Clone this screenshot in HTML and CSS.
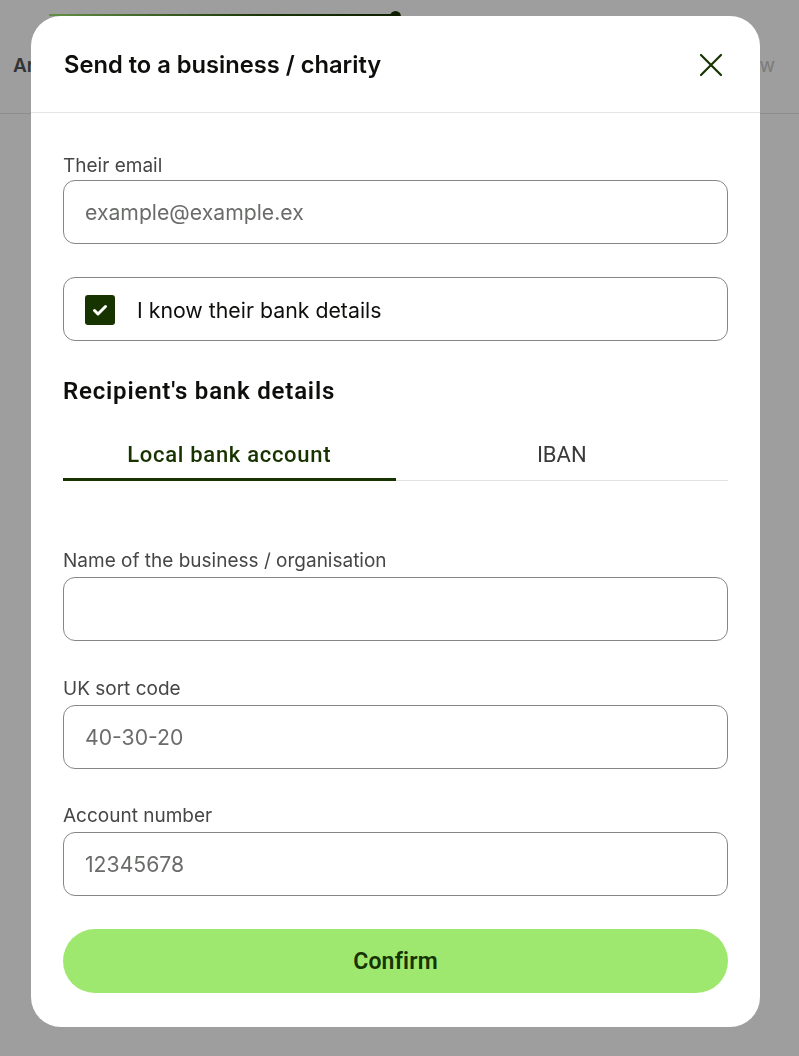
FILE: index.html
```html
<!DOCTYPE html>
<html lang="en">
<head>
<meta charset="utf-8">
<title>Send to a business / charity</title>
<link rel="stylesheet" href="styles.css">
</head>
<body>
<div class="page">
  <div class="progress">
    <div class="progress-fill"></div>
    <span class="progress-dot"></span>
  </div>
  <nav class="steps">
    <span class="step step-done">Ar</span>
    <span class="step step-next">Review</span>
  </nav>
</div>

<div class="overlay"></div>

<div class="modal" role="dialog" aria-labelledby="modal-title">
  <header class="modal-header">
    <h2 id="modal-title" class="modal-title">Send to a business / charity</h2>
    <button class="close-btn" aria-label="Close">
      <svg width="24" height="24" viewBox="0 0 24 24" fill="none" stroke="#163300" stroke-width="2.2" stroke-linecap="round">
        <path d="M2 2 L22 22 M22 2 L2 22"/>
      </svg>
    </button>
  </header>

  <div class="modal-body">
    <div class="field field-first">
      <label class="field-label" for="email">Their email</label>
      <input class="text-input" id="email" type="text" placeholder="example@example.ex">
    </div>

    <label class="check-card">
      <span class="check-box">
        <svg width="30" height="30" viewBox="0 0 30 30" fill="none" stroke="#fff" stroke-width="3" stroke-linecap="round" stroke-linejoin="round">
          <path d="M9.5 15.5 L13 19 L20.5 11.5"/>
        </svg>
      </span>
      <span class="check-text">I know their bank details</span>
    </label>

    <h3 class="section-title">Recipient's bank details</h3>

    <div class="tabs">
      <div class="tab tab-active">Local bank account</div>
      <div class="tab">IBAN</div>
    </div>

    <div class="panel">
      <div class="field">
        <label class="field-label" for="name">Name of the business / organisation</label>
        <input class="text-input" id="name" type="text">
      </div>
      <div class="field">
        <label class="field-label" for="sort">UK sort code</label>
        <input class="text-input" id="sort" type="text" placeholder="40-30-20">
      </div>
      <div class="field">
        <label class="field-label" for="acc">Account number</label>
        <input class="text-input" id="acc" type="text" placeholder="12345678">
      </div>
    </div>

    <button class="confirm-btn">Confirm</button>
  </div>
</div>
</body>
</html>
```

FILE: styles.css
```css
* { box-sizing: border-box; }

html, body {
  margin: 0;
  padding: 0;
  height: 100%;
}

body {
  background: #ffffff;
  font-family: Inter, "Noto Sans", sans-serif;
  overflow: hidden;
}

/* background page */
.page {
  height: 100%;
}

.progress {
  position: relative;
  height: 32px;
  padding-top: 14px;
  padding-left: 49px;
}

.progress-fill {
  width: 346px;
  height: 2px;
  background: linear-gradient(90deg, #9fe870, #2f5a10 60%, #163300);
}

.progress-dot {
  position: absolute;
  left: 390px;
  top: 11px;
  width: 11px;
  height: 11px;
  border-radius: 50%;
  background: #163300;
}

.steps {
  display: flex;
  justify-content: space-between;
  align-items: center;
  height: 82px;
  padding: 0 24px 14px 13px;
  border-bottom: 1px solid #e4e4e4;
  font-size: 19px;
}

.step-done {
  font-weight: 600;
  color: #555;
}

.step-next {
  color: #c8c8c8;
}

.overlay {
  position: fixed;
  inset: 0;
  background: rgba(0, 0, 0, 0.38);
}

/* modal */
.modal {
  position: absolute;
  left: 31px;
  top: 16px;
  width: 729px;
  background: #ffffff;
  border-radius: 30px;
  overflow: hidden;
}

.modal-header {
  display: flex;
  align-items: center;
  justify-content: space-between;
  height: 97px;
  padding: 1px 36px 0 33px;
  border-bottom: 1px solid #e6e6e6;
}

.modal-title {
  margin: 0;
  font-size: 23.7px;
  font-weight: 600;
  color: #0e0f0c;
}

.close-btn {
  display: flex;
  align-items: center;
  justify-content: center;
  width: 26px;
  height: 26px;
  padding: 0;
  border: 0;
  background: none;
}

.modal-body {
  display: flex;
  flex-direction: column;
  padding: 42px 32px 34px;
}

.field {
  display: flex;
  flex-direction: column;
}

.field-label {
  font-size: 19px;
  line-height: 22px;
  color: #454745;
  margin-bottom: 5px;
}

.field-first .field-label {
  margin-bottom: 3px;
}

.text-input {
  height: 64px;
  width: 100%;
  padding: 0 21px;
  border: 1px solid #868685;
  border-radius: 12px;
  font-family: Inter, "Noto Sans", sans-serif;
  font-size: 21.2px;
  color: #0e0f0c;
  background: #fff;
  outline: none;
}

.text-input::placeholder {
  color: #6a6c6a;
  opacity: 1;
}

.check-card {
  display: flex;
  align-items: center;
  gap: 22px;
  height: 64px;
  margin-top: 33px;
  padding: 1px 0 0 21px;
  border: 1px solid #868685;
  border-radius: 12px;
}

.check-box {
  display: flex;
  width: 30px;
  height: 30px;
  border-radius: 3px;
  background: #163300;
}

.check-text {
  font-size: 21.3px;
  color: #0e0f0c;
}

.section-title {
  margin: 36px 0 0;
  font-family: Roboto, "Noto Sans", sans-serif;
  font-size: 24px;
  line-height: 28px;
  font-weight: 600;
  letter-spacing: 0.8px;
  color: #0e0f0c;
}

.tabs {
  display: grid;
  grid-template-columns: 1fr 1fr;
  margin-top: 26px;
  border-bottom: 1px solid #e2e2e2;
}

.tab {
  height: 50px;
  margin-bottom: -1px;
  padding-top: 11px;
  text-align: center;
  font-family: Roboto, "Noto Sans", sans-serif;
  font-size: 22px;
  line-height: 25px;
  color: #3a3a3a;
  border-bottom: 3px solid transparent;
}

.tab-active {
  font-weight: 500;
  letter-spacing: 0.7px;
  color: #163300;
  border-bottom-color: #163300;
}

.panel {
  display: flex;
  flex-direction: column;
  gap: 36.5px;
  margin-top: 69px;
}

.confirm-btn {
  height: 64px;
  margin-top: 33px;
  border: 0;
  border-radius: 32px;
  background: #9fe870;
  font-family: Roboto, "Noto Sans", sans-serif;
  font-size: 23px;
  font-weight: 600;
  letter-spacing: 0.2px;
  color: #163300;
}
```
